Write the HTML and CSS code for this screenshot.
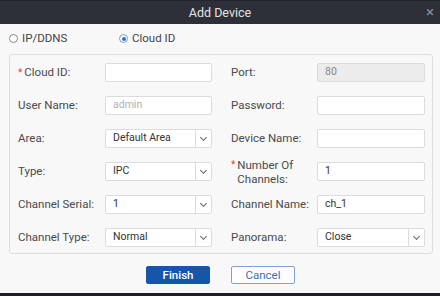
FILE: index.html
```html
<html>
<head>
    <title>Add Device</title>
    <link rel="stylesheet" href="styles.css">
</head>
<body>
    <div class="dialog">
        <div class="dialog__head">
            <span class="dialog__title">Add Device</span>
            <span class="dialog__close">&#215;</span>
        </div>

        <div class="modes">
            <label class="mode"><span class="radio"></span>IP/DDNS</label>
            <label class="mode"><span class="radio radio--on"></span>Cloud ID</label>
        </div>

        <div class="panel">
            <div class="label"><span class="req">*</span>Cloud ID:</div>
            <div class="field"></div>
            <div class="label">Port:</div>
            <div class="field field--off">80</div>

            <div class="label">User Name:</div>
            <div class="field field--hint">admin</div>
            <div class="label">Password:</div>
            <div class="field"></div>

            <div class="label">Area:</div>
            <div class="field field--select"><span class="field__val">Default Area</span><span class="caret"></span></div>
            <div class="label">Device Name:</div>
            <div class="field"></div>

            <div class="label">Type:</div>
            <div class="field field--select"><span class="field__val">IPC</span><span class="caret"></span></div>
            <div class="label label--two"><span class="req">*</span><span>Number Of<br>Channels:</span></div>
            <div class="field">1</div>

            <div class="label">Channel Serial:</div>
            <div class="field field--select"><span class="field__val">1</span><span class="caret"></span></div>
            <div class="label">Channel Name:</div>
            <div class="field">ch_1</div>

            <div class="label">Channel Type:</div>
            <div class="field field--select"><span class="field__val">Normal</span><span class="caret"></span></div>
            <div class="label">Panorama:</div>
            <div class="field field--select"><span class="field__val">Close</span><span class="caret"></span></div>
        </div>

        <div class="actions">
            <button class="btn btn--main">Finish</button>
            <button class="btn">Cancel</button>
        </div>
    </div>
</body>
</html>
```

FILE: styles.css
```css
* {
    box-sizing: border-box;
    margin: 0;
    padding: 0;
}
body {
    background: #1f2024;
    font: 11.5px/1.2 Roboto, "Noto Sans", sans-serif;
    color: #333;
}
.dialog {
    width: 440px;
    height: 293px;
    background: #f8f8f8;
}

/* header */
.dialog__head {
    height: 24px;
    background: #2d3038;
    border-top: 1px solid #23252b;
    display: flex;
    align-items: center;
    justify-content: center;
    position: relative;
}
.dialog__title {
    color: #e2e2e2;
    font-size: 12.5px;
}
.dialog__close {
    position: absolute;
    right: 6px;
    top: 2px;
    color: #8a8d94;
    font-size: 15px;
}

/* mode radios */
.modes {
    height: 30px;
    display: flex;
    align-items: center;
    padding-left: 9px;
}
.mode {
    display: flex;
    align-items: center;
    gap: 4px;
    width: 110px;
    color: #444;
}
.radio {
    width: 9px;
    height: 9px;
    border: 1px solid #888;
    border-radius: 50%;
    background: #fff;
    position: relative;
}
.radio--on {
    border-color: #7a9cc8;
}
.radio--on::after {
    content: "";
    position: absolute;
    left: 1.5px;
    top: 1.5px;
    width: 4px;
    height: 4px;
    border-radius: 50%;
    background: #2d6fc4;
}

/* form panel */
.panel {
    margin: 0 7px 0 9px;
    border: 1px solid #dedede;
    border-radius: 3px;
    padding: 8px 7px 6px 8px;
    display: grid;
    grid-template-columns: 87px 107px 19px 86px 108px;
    grid-auto-rows: 19px;
    row-gap: 14px;
}
.label {
    display: flex;
    align-items: center;
    color: #4a4a4a;
}
.panel > .label:nth-child(4n+3) {
    grid-column: 4;
}
.label--two {
    align-items: flex-start;
    line-height: 14px;
    margin-top: -4px;
}
.req {
    color: #e0443b;
    font-size: 10px;
    margin-right: 2px;
}
.field {
    background: #fff;
    border: 1px solid #dcdcdc;
    border-radius: 2px;
    display: flex;
    align-items: center;
    padding-left: 7px;
    font-size: 10.5px;
    color: #333;
}
.field--off {
    background: #ececec;
    color: #888;
}
.field--hint {
    color: #b0b0b0;
}
.field--select {
    padding-right: 0;
}
.field__val {
    flex: 1;
}
.caret {
    width: 16px;
    height: 100%;
    border-left: 1px solid #dcdcdc;
    position: relative;
}
.caret::after {
    content: "";
    position: absolute;
    left: 5px;
    top: 5px;
    width: 4px;
    height: 4px;
    border-right: 1px solid #666;
    border-bottom: 1px solid #666;
    transform: rotate(45deg);
}

/* buttons */
.actions {
    display: flex;
    justify-content: center;
    gap: 21px;
    padding-top: 12px;
    padding-left: 1px;
}
.btn {
    width: 64px;
    height: 18px;
    border: 1px solid #7aa3d6;
    border-radius: 2px;
    background: #fff;
    color: #3c6fae;
    font: 11.5px Roboto, "Noto Sans", sans-serif;
}
.btn--main {
    background: #1656a8;
    border-color: #1656a8;
    color: #fff;
    font-weight: 500;
}
```
